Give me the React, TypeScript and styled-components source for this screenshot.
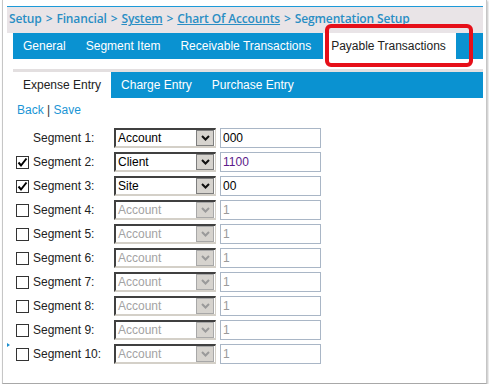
import styled, { createGlobalStyle } from "styled-components";

const GlobalStyle = createGlobalStyle`
  html, body {
    margin: 0;
    padding: 0;
    background: #ffffff;
  }
  body {
    font-family: "Liberation Sans", Arial, sans-serif;
    font-size: 12px;
    color: #222;
  }
  * {
    box-sizing: border-box;
  }
`;

const Frame = styled.div`
  position: relative;
  margin-left: 2px;
  width: 485px;
  height: 384px;
  padding-top: 6px;
  background: #fff;
  border: 1px solid #c6c6c6;
  border-top: none;
  border-bottom-color: #a8a8a8;
  box-shadow: 1px 1px 2px rgba(0, 0, 0, 0.25);
`;

const Crumbs = styled.div`
  margin: 0 3px 0 4px;
  height: 27px;
  border-top: 1px solid #1d9ad8;
  background: #e9e4e7;
  padding: 4px 0 0 2px;
  font-family: "Open Sans", sans-serif;
  font-weight: 600;
  font-size: 12px;
  letter-spacing: -0.14px;
  line-height: 16px;
  color: #2a8ec4;
  white-space: nowrap;
  overflow: hidden;
`;

const Crumb = styled.span<{ $link?: boolean }>`
  text-decoration: ${(p) => (p.$link ? "underline" : "none")};
`;

const Sep = styled.span`
  margin: 0 4px;
`;

const TabBar = styled.div<{ $sub?: boolean }>`
  display: flex;
  margin: ${(p) => (p.$sub ? "10px 3px 0 10px" : "0 3px 0 10px")};
  height: ${(p) => (p.$sub ? "29px" : "26px")};
  border-top: ${(p) => (p.$sub ? "3px solid #e3dfe0" : "none")};
  background: #0a92d1;
`;

const Tab = styled.div<{ $active?: boolean; $shift?: boolean }>`
  height: 26px;
  line-height: 26px;
  padding: ${(p) => (p.$shift ? "0 10px 0 8px" : "0 10px")};
  margin-left: ${(p) => (p.$shift ? "2px" : "0")};
  font-size: 12px;
  white-space: nowrap;
  color: ${(p) => (p.$active ? "#222" : "#fff")};
  background: ${(p) => (p.$active ? "#fff" : "transparent")};
`;

const Links = styled.div`
  padding: 4px 0 8px 14px;
  line-height: 16px;
  font-size: 12px;
  color: #333;
`;

const Link = styled.a`
  color: #1b95d5;
  text-decoration: none;
`;

const Rows = styled.div`
  padding-left: 13px;
`;

const Row = styled.div`
  display: flex;
  align-items: center;
  height: 24px;
`;

const Check = styled.span<{ $hidden?: boolean }>`
  width: 13px;
  height: 13px;
  margin-right: 4px;
  border: 1px solid #333;
  background: #fff;
  visibility: ${(p) => (p.$hidden ? "hidden" : "visible")};
  display: flex;
  align-items: center;
  justify-content: center;
`;

const Label = styled.span`
  width: 81px;
  font-size: 12px;
  color: #222;
  white-space: nowrap;
`;

const Select = styled.div<{ $disabled?: boolean }>`
  width: 102px;
  height: 20px;
  display: flex;
  align-items: center;
  justify-content: space-between;
  padding-left: 2px;
  border-style: solid;
  border-width: 2px 1px 2px 2px;
  border-color: #404040 #d4d0c8 #d4d0c8 #404040;
  background: #fff;
  font-size: 12px;
  color: ${(p) => (p.$disabled ? "#a3a3a3" : "#000")};
`;

const Arrow = styled.span<{ $disabled?: boolean }>`
  width: 18px;
  height: 16px;
  margin-right: 1px;
  display: flex;
  align-items: center;
  justify-content: center;
  background: #d6d3ce;
  border: 1px solid ${(p) => (p.$disabled ? "#a8a8a8" : "#7e7e7e")};
`;

const Input = styled.div<{ $color: string }>`
  width: 101px;
  height: 20px;
  margin-left: 4px;
  padding: 0 2px;
  line-height: 18px;
  border: 1px solid #a9b6c6;
  background: #fff;
  font-size: 12px;
  color: ${(p) => p.$color};
`;

const Marker = styled.span`
  position: absolute;
  left: 4px;
  top: 343px;
  width: 0;
  height: 0;
  border-left: 3px solid #1b8fd0;
  border-top: 2px solid transparent;
  border-bottom: 2px solid transparent;
`;

const Callout = styled.div`
  position: absolute;
  left: 322px;
  top: 24px;
  width: 148px;
  height: 43px;
  border: 4px solid #e60f19;
  border-radius: 6px;
  pointer-events: none;
`;

type Seg = {
  n: number;
  check: "none" | "on" | "off";
  type: string;
  value: string;
};

const segments: Seg[] = [
  { n: 1, check: "none", type: "Account", value: "000" },
  { n: 2, check: "on", type: "Client", value: "1100" },
  { n: 3, check: "on", type: "Site", value: "00" },
  ...[4, 5, 6, 7, 8, 9, 10].map((n) => ({
    n,
    check: "off" as const,
    type: "Account",
    value: "1",
  })),
];

function Chevron({ disabled }: { disabled: boolean }) {
  return (
    <svg width="9" height="6" viewBox="0 0 9 6">
      <polyline
        points="1,1 4.5,4.5 8,1"
        fill="none"
        stroke={disabled ? "#9a9a9a" : "#111"}
        strokeWidth="2"
      />
    </svg>
  );
}

function SegmentRow({ seg }: { seg: Seg }) {
  const disabled = seg.check === "off";
  const valueColor = disabled ? "#9a9a9a" : seg.value === "1100" ? "#5c1a8a" : "#000";
  return (
    <Row>
      <Check $hidden={seg.check === "none"}>
        {seg.check === "on" && (
          <svg width="11" height="11" viewBox="0 0 11 11">
            <polyline points="1.5,5.5 4,8.5 9.5,1.5" fill="none" stroke="#000" strokeWidth="2" />
          </svg>
        )}
      </Check>
      <Label>Segment {seg.n}:</Label>
      <Select $disabled={disabled}>
        {seg.type}
        <Arrow $disabled={disabled}>
          <Chevron disabled={disabled} />
        </Arrow>
      </Select>
      <Input $color={valueColor}>{seg.value}</Input>
    </Row>
  );
}

export default function App() {
  return (
    <>
      <GlobalStyle />
      <Frame>
        <Crumbs>
          <Crumb>Setup</Crumb>
          <Sep>&gt;</Sep>
          <Crumb>Financial</Crumb>
          <Sep>&gt;</Sep>
          <Crumb $link>System</Crumb>
          <Sep>&gt;</Sep>
          <Crumb $link>Chart Of Accounts</Crumb>
          <Sep>&gt;</Sep>
          <Crumb>Segmentation Setup</Crumb>
        </Crumbs>

        <TabBar>
          <Tab>General</Tab>
          <Tab>Segment Item</Tab>
          <Tab>Receivable Transactions</Tab>
          <Tab $active $shift>
            Payable Transactions
          </Tab>
        </TabBar>

        <TabBar $sub>
          <Tab $active>Expense Entry</Tab>
          <Tab>Charge Entry</Tab>
          <Tab>Purchase Entry</Tab>
        </TabBar>

        <Links>
          <Link>Back</Link> | <Link>Save</Link>
        </Links>

        <Rows>
          {segments.map((s) => (
            <SegmentRow key={s.n} seg={s} />
          ))}
        </Rows>

        <Marker />
        <Callout />
      </Frame>
    </>
  );
}
